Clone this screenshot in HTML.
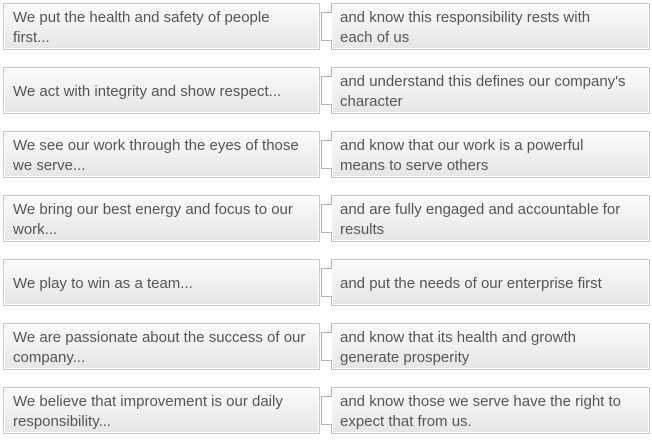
<!DOCTYPE html>
<html><head><style>
body{margin:0;background:#fff;width:652px;height:440px;overflow:hidden;font-family:"Liberation Sans",sans-serif;}
.row{position:absolute;left:0;width:652px;height:50px;}
.box{position:absolute;top:3px;height:47px;border:1px solid #c8c8c8;box-shadow:inset 0 0 0 1px #fff;background:linear-gradient(#fbfbfb,#e6e6e6);color:#555;font-size:15px;line-height:20px;display:flex;align-items:center;box-sizing:border-box;white-space:nowrap;padding-top:3px;}
.l{left:3px;width:317px;padding-left:9px;}
.r{left:331px;width:319px;padding-left:9px;border-left:none;}
.b{position:absolute;top:3px;left:319px;z-index:2;}
</style></head><body>
<div id="c"></div>
<script>
var d=[["We put the health and safety of people<br>first...","and know this responsibility rests with<br>each of us"],
["We act with integrity and show respect...","and understand this defines our company's<br>character"],
["We see our work through the eyes of those<br>we serve...","and know that our work is a powerful<br>means to serve others"],
["We bring our best energy and focus to our<br>work...","and are fully engaged and accountable for<br>results"],
["We play to win as a team...","and put the needs of our enterprise first"],
["We are passionate about the success of our<br>company...","and know that its health and growth<br>generate prosperity"],
["We believe that improvement is our daily<br>responsibility...","and know those we serve have the right to<br>expect that from us."]];
var h="";
d.forEach(function(r,i){
h+='<div class="row" style="top:'+(i*64)+'px"><div class="box l"><div>'+r[0]+'</div></div><div class="box r"><div>'+r[1]+'</div></div>'+
'<svg class="b" width="14" height="47"><path d="M12.5 0V9.5H2.5V37.5H12.5V47" fill="none" stroke="#b0b0b0"/><path d="M13.5 1V10.5H3.5V36.5H13.5V46" fill="none" stroke="#fff"/></svg></div>';
});
document.getElementById("c").innerHTML=h;
</script>
</body></html>
